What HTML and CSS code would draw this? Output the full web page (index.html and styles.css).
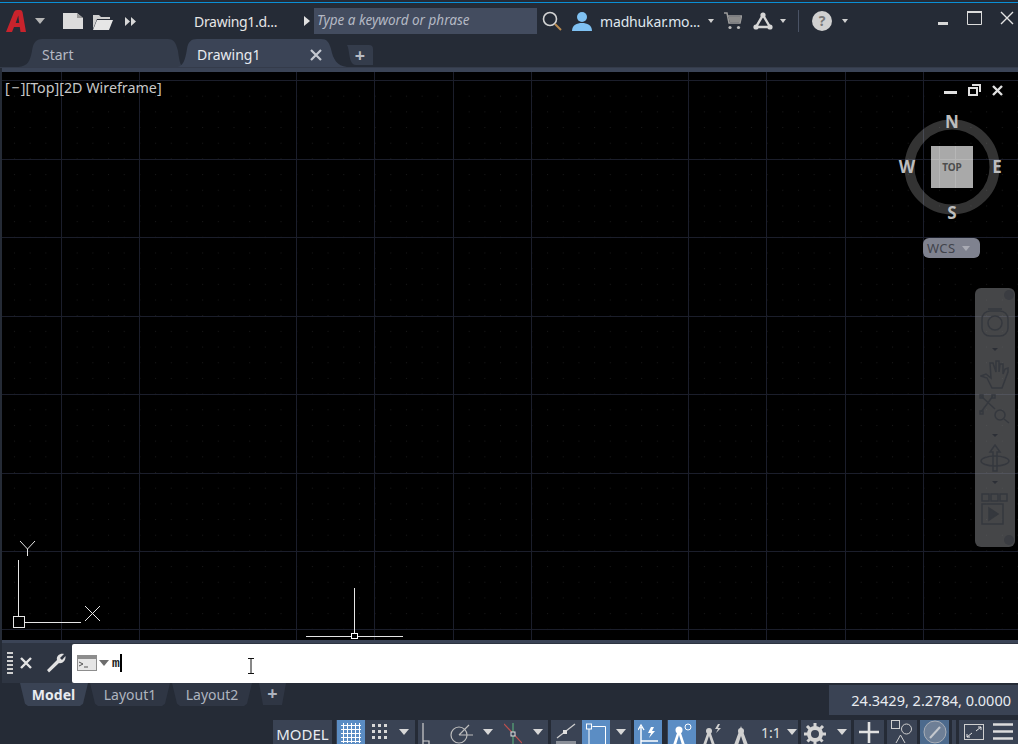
FILE: index.html
```html
<!DOCTYPE html>
<html lang="en">
  <head>
    <meta charset="UTF-8" />
    <title>AutoCAD - Drawing1</title>
    <link rel="stylesheet" href="styles.css">
  </head>
  <body>
    <!-- Title bar -->
    <header class="titlebar">
      <svg class="logo" width="20" height="24" viewBox="0 0 20 24"><path d="M0 23 L8 3 Q9 1 11 1 H14 Q16 1 16.5 3 L20 23 H14.5 L13.8 18 H8 L6 23 Z M9.7 14 H13.2 L12.3 6.5 Z" fill="#c8232c" fill-rule="evenodd"/></svg>
      <span class="caret caret-logo"></span>
      <svg class="ico-new" width="20" height="16" viewBox="0 0 20 16"><path d="M0 0 H14 L20 5 V16 H0 Z" fill="#dcdcdc"/><path d="M14 0 V5 H20" fill="#9a9a9a"/></svg>
      <svg class="ico-open" width="20" height="17" viewBox="0 0 20 17"><path d="M0 16 V2 H6 L8 4 H17 V6 H4 Z" fill="#cfcfcf"/><path d="M4 7 H20 L16 17 H0 Z" fill="#e6e6e6"/></svg>
      <svg class="ico-more" width="11" height="9" viewBox="0 0 11 9"><path d="M0 0 L5 4.5 L0 9 Z M6 0 L11 4.5 L6 9 Z" fill="#d8d8d8"/></svg>
      <span class="doc-name">Drawing1.d...</span>
      <svg class="ico-play" width="6" height="10" viewBox="0 0 6 10"><path d="M0 0 L6 5 L0 10 Z" fill="#e0e0e0"/></svg>
      <div class="search">Type a keyword or phrase</div>
      <svg class="ico-lens" width="20" height="20" viewBox="0 0 20 20"><circle cx="8" cy="8" r="6.5" fill="none" stroke="#d4d4d4" stroke-width="1.6"/><path d="M13 13 L19 19" stroke="#b98a4e" stroke-width="2"/></svg>
      <svg class="ico-user" width="20" height="20" viewBox="0 0 20 20"><circle cx="10" cy="6" r="5" fill="#7fc1f2"/><path d="M0 20 C0 14 5 12 10 12 C15 12 20 14 20 20 Z" fill="#7fc1f2"/></svg>
      <span class="user-name">madhukar.mo...</span>
      <span class="caret caret-small caret-user"></span>
      <svg class="ico-cart" width="18" height="18" viewBox="0 0 18 18"><path d="M0 1 H3 L5 11 H16 L17.5 4 H4" fill="none" stroke="#9b9b9b" stroke-width="1.5"/><path d="M4.5 5 H17 L16 10 H5.5 Z" fill="#8a8a8a"/><circle cx="6" cy="15.5" r="1.6" fill="#bbb"/><circle cx="14.5" cy="15.5" r="1.6" fill="#bbb"/></svg>
      <svg class="ico-tri" width="20" height="18" viewBox="0 0 20 18"><path d="M10 3 L17 15 H3 Z" fill="none" stroke="#d6d6d6" stroke-width="2.4"/><circle cx="10" cy="3" r="2.6" fill="#d6d6d6"/><circle cx="3" cy="15" r="2.6" fill="#d6d6d6"/><circle cx="17" cy="15" r="2.6" fill="#d6d6d6"/></svg>
      <span class="caret caret-small caret-tri"></span>
      <span class="sep"></span>
      <span class="help">?</span>
      <span class="caret caret-small caret-help"></span>
      <svg class="win-min" width="10" height="3" viewBox="0 0 10 3"><rect width="10" height="3" fill="#d8d8d8"/></svg>
      <svg class="win-max" width="15" height="14" viewBox="0 0 15 14"><path d="M.5 1.5 H14.5 V13.5 H.5 Z" fill="none" stroke="#dcdcdc"/><rect width="15" height="2" fill="#dcdcdc"/></svg>
      <svg class="win-close" width="14" height="14" viewBox="0 0 14 14"><path d="M1 1 L13 13 M13 1 L1 13" stroke="#e4e4e4" stroke-width="1.4"/></svg>
    </header>

    <!-- File tabs -->
    <nav class="filetabs">
      <div class="filetab tab-start">
        <svg class="tab-shape" viewBox="0 0 165 28" preserveAspectRatio="none"><path d="M0 28 C10 27 12 22 14 12 C15 4 18 0 24 0 H150 C156 0 158 4 160 12 C161 20 162 26 165 28 Z" fill="#343c4b"/></svg>
        <span class="tab-label">Start</span>
      </div>
      <div class="filetab tab-active">
        <svg class="tab-shape" viewBox="0 0 170 28" preserveAspectRatio="none"><path d="M0 28 C6 27 8 22 10 10 C11 3 14 0 20 0 H144 C150 0 152 3 154 10 C156 20 160 27 170 28 Z" fill="#3b4456"/></svg>
        <span class="tab-label">Drawing1</span>
        <svg class="tab-close" width="12" height="12" viewBox="0 0 12 12"><path d="M1 1 L11 11 M11 1 L1 11" stroke="#c4c8d0" stroke-width="2.2"/></svg>
      </div>
      <div class="filetab tab-plus">
        <svg class="tab-shape" viewBox="0 0 26 20" preserveAspectRatio="none"><path d="M0 0 H22 Q26 0 26 4 V20 H9 C4 20 3 14 2 8 C1.500 4 1 2 0 0 Z" fill="#343c4b"/></svg>
        <span class="plus">+</span>
      </div>
    </nav>

    <!-- Drawing area -->
    <main class="viewport">
      <svg class="canvas" width="1016" height="568" viewBox="2 72 1016 568">
        <defs>
          <pattern id="dots" x="61" y="80" width="15.68" height="15.68" patternUnits="userSpaceOnUse">
            <rect width="1" height="1" fill="#191919"/>
          </pattern>
        </defs>
        <rect x="2" y="72" width="1016" height="568" fill="#000"/>
        <rect x="2" y="72" width="1016" height="568" fill="url(#dots)"/>
        <g stroke="#1b1e2b" stroke-width="1">
          <path d="M2 80.5 H1018 M2 159.5 H1018 M2 237.5 H1018 M2 316.5 H1018 M2 394.5 H1018 M2 473.5 H1018 M2 551.5 H1018 M2 629.5 H1018"/>
          <path d="M61.5 72 V640 M139.5 72 V640 M296.5 72 V640 M374.5 72 V640 M453.5 72 V640 M531.5 72 V640 M688.5 72 V640 M766.5 72 V640 M845.5 72 V640 M923.5 72 V640"/>
        </g>
        <!-- UCS icon -->
        <g stroke="#e6e6e6" fill="none" stroke-width="1">
          <path d="M18.5 560 V616 M25 622.5 H81"/>
          <rect x="13.5" y="616.5" width="11" height="11"/>
          <path d="M85 606 L100 621 M100 606 L85 621"/>
          <path d="M20 541 L27.5 549 L35 541 M27.5 549 V556"/>
        </g>
        <!-- Crosshair -->
        <g stroke="#e6e6e6" fill="none" stroke-width="1">
          <path d="M354.5 588 V633 M306 636.5 H351 M358 636.5 H403"/>
          <rect x="351.5" y="633.5" width="6" height="5" stroke="#fff"/>
        </g>
      </svg>

      <div class="view-label">[&#8202;&minus;&#8202;][Top][2D Wireframe]</div>

      <div class="view-controls">
        <span class="vc-min"></span>
        <svg width="13" height="12" viewBox="0 0 13 12"><path d="M4 1 H12 V8 M1 4 H9 V11 H1 Z" fill="none" stroke="#e0e0e0" stroke-width="2"/></svg>
        <svg width="11" height="11" viewBox="0 0 11 11"><path d="M1 1 L10 10 M10 1 L1 10" stroke="#e0e0e0" stroke-width="2.4"/></svg>
      </div>

      <svg class="viewcube" width="114" height="114" viewBox="0 0 114 114">
        <circle cx="57" cy="56" r="42.500" fill="none" stroke="#fff" stroke-opacity=".2" stroke-width="10"/>
        <rect x="36" y="35" width="42" height="42" fill="#a9a9a9"/>
        <path d="M44.500 35 V77 M60.500 35 V77 M36 48.500 H78" stroke="#b6b6b6"/>
        <text x="57" y="60" class="cube-top">TOP</text>
        <text x="57" y="17" class="cube-dir">N</text>
        <text x="57" y="108" class="cube-dir">S</text>
        <text x="12" y="62" class="cube-dir">W</text>
        <text x="102" y="62" class="cube-dir">E</text>
      </svg>

      <div class="wcs">WCS <span class="wcs-caret"></span></div>

      <!-- Navigation bar -->
      <aside class="navbar">
        <span class="nav-dot nav-dot-top"></span>
        <svg width="30" height="30" viewBox="0 0 30 30" fill="none" stroke-width="1.5"><rect x="2" y="3" width="26" height="25" rx="8"/><circle cx="15" cy="15" r="7"/><path d="M8 1 H22"/></svg>
        <span class="nav-caret nav-c1"></span>
        <svg class="nav-hand" width="30" height="30" viewBox="0 0 30 30" fill="none" stroke-width="1.5"><path d="M1 17 L7 19 L12 29 H22 L28 13 V9 L25 10 L23 15 V5 L20 5 L19 13 V2 H16 V13 L13 4 H10 L11 19 L6 15 Z"/></svg>
        <svg class="nav-zoom" width="32" height="30" viewBox="0 0 32 30" fill="none" stroke-width="1.5"><path d="M2 2 L16 15 M14 2 L2 18"/><rect x="1" y="1" width="3" height="3"/><rect x="13" y="1" width="3" height="3"/><rect x="1" y="17" width="3" height="3"/><circle cx="21" cy="21" r="5"/><path d="M25 25 L30 29"/></svg>
        <span class="nav-caret nav-c2"></span>
        <svg class="nav-orbit" width="32" height="28" viewBox="0 0 32 28" fill="none" stroke-width="1.5"><path d="M16 1 L21 8 H18 V27 H14 V8 H11 Z"/><ellipse cx="16" cy="17" rx="14" ry="5"/></svg>
        <span class="nav-caret nav-c3"></span>
        <svg class="nav-show" width="30" height="32" viewBox="0 0 30 32" fill="none" stroke-width="1.5"><rect x="2" y="1" width="7" height="7"/><rect x="11" y="1" width="7" height="7"/><rect x="20" y="1" width="7" height="7"/><rect x="2" y="11" width="21" height="20"/><path class="nav-play" d="M9 15 L18 21 L9 27 Z"/></svg>
        <span class="nav-dot nav-dot-bottom"></span>
      </aside>
    </main>

    <!-- Command line -->
    <section class="cmdline">
      <span class="grip"></span>
      <svg class="cmd-x" width="12" height="12" viewBox="0 0 12 12"><path d="M1 1 L11 11 M11 1 L1 11" stroke="#e4e4e4" stroke-width="2.4"/></svg>
      <svg class="cmd-wrench" width="20" height="20" viewBox="0 0 20 20"><path d="M1 17 L11 7 C10 3 14 0 18 1 L14 5 L16 7 L19.5 3 C20 8 16 11 13 10 L3 19.5 Z" fill="#e2e2e2"/></svg>
      <div class="cmd-input">
        <svg width="20" height="16" viewBox="0 0 20 16"><rect width="20" height="16" fill="#8d8d8d"/><rect x="1" y="4" width="18" height="11" fill="#e6e6e6"/><path d="M2 7 L6 9 L2 11 M7 12 H11" fill="none" stroke="#555" stroke-width="1"/></svg>
        <span class="caret caret-cmd"></span>
        <span class="cmd-text">m</span><span class="cmd-cursor"></span>
        <svg class="ibeam" width="8" height="16" viewBox="0 0 8 16"><path d="M1 .5 H7 M1 15.500 H7 M4 .5 V15.500" stroke="#111" stroke-width="1" fill="none"/></svg>
      </div>
    </section>

    <!-- Layout tabs and coordinates -->
    <section class="layoutbar">
      <div class="layout-tab active">Model</div>
      <div class="layout-tab">Layout1</div>
      <div class="layout-tab">Layout2</div>
      <div class="layout-plus">+</div>
      <div class="coords">24.3429, 2.2784, 0.0000</div>
    </section>

    <!-- Status bar -->
    <footer class="statusbar">
      <div class="group w59 model">MODEL</div>
      <div class="group w79">
        <button class="btn on w28"><svg width="20" height="20" viewBox="0 0 20 20"><path d="M0 2.500 H20 M0 6.500 H20 M0 10.500 H20 M0 14.500 H20 M0 18.500 H20 M2.500 0 V20 M6.500 0 V20 M10.500 0 V20 M14.500 0 V20 M18.500 0 V20" stroke="#fff"/></svg></button>
        <button class="btn w28"><svg width="16" height="16" viewBox="0 0 16 16"><g fill="#d8d8d8"><rect x="1" y="1" width="3" height="3"/><rect x="7" y="1" width="3" height="3"/><rect x="13" y="1" width="3" height="3"/><rect x="1" y="7" width="3" height="3"/><rect x="7" y="7" width="3" height="3"/><rect x="13" y="7" width="3" height="3"/><rect x="1" y="13" width="3" height="3"/><rect x="7" y="13" width="3" height="3"/><rect x="13" y="13" width="3" height="3"/></g></svg></button>
        <span class="caret caret-st"></span>
      </div>
      <div class="group w130">
        <button class="btn w28 btn-ortho"><svg width="8" height="24" viewBox="0 0 8 24"><path d="M1 0 V24 M1 18 H7 V24" fill="none" stroke="#cfcfcf" stroke-width="1.2"/></svg></button>
        <button class="btn w32"><svg width="24" height="22" viewBox="0 0 24 22"><circle cx="10" cy="12" r="8" fill="none" stroke="#bdbdbd" stroke-width="1.2"/><path d="M10 12 L20 2 M10 12 H24" stroke="#bdbdbd" stroke-width="1.2"/></svg></button>
        <span class="caret caret-st"></span>
        <button class="btn w28"><svg width="18" height="24" viewBox="0 0 18 24"><path d="M0 1 L18 20" stroke="#c0504d" stroke-width="1.2"/><path d="M9 0 V24" stroke="#58a878" stroke-width="1.2"/><rect x="7" y="9" width="4" height="4" fill="#3b4456" stroke="#e0e0e0"/></svg></button>
        <span class="caret caret-st"></span>
      </div>
      <div class="group w80">
        <button class="btn w31"><svg width="20" height="22" viewBox="0 0 20 22"><path d="M1 15 L19 1" stroke="#cfcfcf" stroke-width="1.2"/><rect y="18" width="20" height="4" fill="#8a8f98"/><rect x="7" y="7" width="4" height="4" fill="#e0e0e0"/></svg></button>
        <button class="btn on w28"><svg width="20" height="24" viewBox="0 0 20 24"><path d="M6.500 3.500 H19.500 V24" fill="none" stroke="#fff"/><rect x=".5" y="1" width="5" height="5" fill="none" stroke="#fff"/><path d="M3 6 V24" stroke="#fff"/></svg></button>
        <span class="caret caret-st"></span>
      </div>
      <div class="group w28 tail">
        <button class="btn on w28"><svg width="20" height="22" viewBox="0 0 20 22"><path d="M3 22 V4 M0 7 L3 2 L6 7 M3 18 H20" fill="none" stroke="#fff" stroke-width="1.4"/><path d="M13 4 L10 10 H13 L11 15 L17 8 H14 L16 4 Z" fill="#fff"/></svg></button>
      </div>
      <div class="group w131">
        <button class="btn on w28"><svg width="22" height="22" viewBox="0 0 22 22"><path d="M8 4 L2 22 H5 L8 12 L11 22 H14 Z" fill="#fff"/><circle cx="8" cy="7" r="3.500" fill="#fff"/><circle cx="17" cy="4" r="3" fill="none" stroke="#fff"/></svg></button>
        <button class="btn w31"><svg width="22" height="22" viewBox="0 0 22 22"><path d="M8 5 L2 22 H5 L8 13 L11 22 H14 Z" fill="#cfcfcf"/><circle cx="8" cy="8" r="3" fill="#cfcfcf"/><path d="M17 1 L14 6 H17 L15 10 L20 5 H17 L19 1 Z" fill="#cfcfcf"/></svg></button>
        <button class="btn w28"><svg width="20" height="22" viewBox="0 0 20 22"><path d="M10 3 L3 22 H7 L10 13 L13 22 H17 Z" fill="#cfcfcf"/><circle cx="10" cy="8" r="3" fill="#cfcfcf"/></svg></button>
        <span class="scale">1:1</span>
        <span class="caret caret-st caret-scale"></span>
      </div>
      <div class="group w50">
        <button class="btn w32"><svg width="22" height="22" viewBox="0 0 22 22"><circle cx="11" cy="11" r="6" fill="none" stroke="#d4d4d4" stroke-width="4"/><path d="M11 0 V22 M0 11 H22 M3 3 L19 19 M19 3 L3 19" stroke="#d4d4d4" stroke-width="3" stroke-dasharray="4 14"/></svg></button>
        <span class="caret caret-st"></span>
      </div>
      <div class="group w30">
        <svg width="20" height="22" viewBox="0 0 20 22"><path d="M10 1 V22 M0 11 H20" stroke="#e2e2e2" stroke-width="2.6"/></svg>
      </div>
      <div class="group w30">
        <svg width="22" height="24" viewBox="0 0 22 24"><rect x=".5" y=".5" width="8" height="8" fill="none" stroke="#cfcfcf"/><circle cx="15.500" cy="9" r="5" fill="none" stroke="#cfcfcf"/><path d="M5 23 L9.500 15 L14 23" fill="none" stroke="#cfcfcf"/></svg>
      </div>
      <div class="group w29 muted">
        <svg width="24" height="24" viewBox="0 0 24 24"><circle cx="12" cy="12" r="11" fill="#6e7f96" stroke="#a7adb6"/><path d="M7 18 L17 7" stroke="#c4c8ce" stroke-width="2"/></svg>
      </div>
      <div class="group w4"></div>
      <div class="group grow">
        <svg width="20" height="16" viewBox="0 0 20 16"><rect x=".5" y=".5" width="19" height="15" fill="none" stroke="#cfcfcf"/><path d="M3 13 L8 9 M3 13 V10 M3 13 H6 M17 3 L12 7 M17 3 V6 M17 3 H14" stroke="#e6e6e6" fill="none"/></svg>
        <svg width="20" height="18" viewBox="0 0 20 18"><path d="M0 1.500 H20 M0 8.500 H20 M0 15.500 H20" stroke="#dcdcdc" stroke-width="2.400"/></svg>
      </div>
    </footer>
  </body>
</html>
```

FILE: styles.css
```css
* {
  box-sizing: border-box;
}
html,
body {
  margin: 0;
  height: 100%;
}
body {
  width: 1018px;
  height: 744px;
  overflow: hidden;
  display: flex;
  flex-direction: column;
  background: #252b36;
  font-family: "Noto Sans", "Open Sans", sans-serif;
  color: #e6e6e6;
}

/* Title bar */
.titlebar {
  height: 39px;
  flex: none;
  display: flex;
  align-items: center;
  padding: 3px 0 0 6px;
  background: linear-gradient(#252b36 2px, #0a8fd6 2px 3px, transparent 3px);
}
.caret {
  width: 0;
  height: 0;
  flex: none;
  border-left: 5px solid transparent;
  border-right: 5px solid transparent;
  border-top: 6px solid #b5b5b5;
}
.caret-small {
  border-left-width: 3.5px;
  border-right-width: 3.5px;
  border-top-width: 4px;
  border-top-color: #d0d0d0;
}
.titlebar svg,
.titlebar span {
  flex: none;
}
.caret-logo { margin-left: 9px; }
.ico-new { margin-left: 18px; }
.ico-open { margin-left: 10px; }
.ico-more { margin-left: 12px; }
.doc-name {
  margin-left: 58px;
  width: 104px;
  font-size: 14px;
  letter-spacing: -.3px;
}
.ico-play { margin-left: 6px; }
.search {
  margin-left: 4px;
  width: 223px;
  height: 26px;
  flex: none;
  padding-left: 3px;
  line-height: 25px;
  background: #434c5f;
  color: #b4b9c4;
  font-size: 13.5px;
  font-style: italic;
}
.ico-lens { margin-left: 5px; }
.ico-user { margin-left: 10px; }
.user-name {
  margin-left: 8px;
  width: 104px;
  font-size: 14px;
  letter-spacing: -.15px;
  color: #dfe6ee;
}
.caret-user { margin-left: 4px; }
.ico-cart { margin-left: 10px; }
.ico-tri { margin-left: 11px; }
.caret-tri { margin-left: 7px; }
.sep {
  width: 1px;
  height: 22px;
  margin-left: 12px;
  background: #4a5365;
}
.help {
  width: 20px;
  height: 20px;
  margin-left: 13px;
  border-radius: 50%;
  background: #d0d0d0;
  color: #777;
  font-size: 14px;
  font-weight: 700;
  line-height: 20px;
  text-align: center;
}
.caret-help { margin-left: 10px; }
.win-min { margin: 5px 0 0 90px; }
.win-max { margin: -6px 0 0 19px; }
.win-close { margin: -6px 0 0 18px; }

/* File tabs */
.filetabs {
  height: 29px;
  flex: none;
  display: flex;
  align-items: flex-end;
  padding-left: 18px;
  border-bottom: 1px solid #343b4a;
}
.filetab {
  position: relative;
  height: 28px;
  display: flex;
  align-items: center;
  padding-top: 3px;
  font-size: 14px;
}
.tab-shape {
  position: absolute;
  left: 0;
  top: 0;
  width: 100%;
  height: 100%;
}
.tab-label,
.tab-close,
.plus {
  position: relative;
}
.tab-start {
  width: 165px;
  padding-left: 24px;
  color: #b4b9c4;
}
.tab-active {
  width: 170px;
  margin-left: -6px;
  padding-left: 20px;
  color: #e8ebf0;
}
.tab-close {
  margin-left: 50px;
}
.tab-plus {
  width: 26px;
  height: 20px;
  margin: 0 0 2px;
  padding-top: 0;
  justify-content: center;
}
.plus {
  color: #b8bcc4;
  font-size: 18px;
  font-weight: 700;
  line-height: 20px;
}

/* Drawing area */
.viewport {
  position: relative;
  flex: 1;
  min-height: 0;
  margin-left: 2px;
  border-top: 4px solid #3b4456;
  background: #000;
  overflow: hidden;
}
.canvas {
  display: block;
  position: absolute;
  left: 0;
  top: 0;
}
.view-label {
  position: absolute;
  left: 3px;
  top: 7px;
  font-size: 14.3px;
  line-height: 18px;
  color: #c8c8c8;
}
.view-controls {
  position: absolute;
  left: 942px;
  top: 12px;
  display: flex;
  align-items: center;
  gap: 11px;
}
.vc-min {
  width: 13px;
  height: 3px;
  margin-top: 5px;
  background: #e0e0e0;
}
.viewcube {
  position: absolute;
  left: 893px;
  top: 39px;
}
.cube-top {
  font-family: "Noto Sans", sans-serif;
  font-size: 10px;
  font-weight: 700;
  fill: #4d4d4d;
  text-anchor: middle;
}
.cube-dir {
  font-family: "Noto Sans", sans-serif;
  font-size: 17px;
  font-weight: 700;
  fill: #bdbdbd;
  text-anchor: middle;
}
.wcs {
  position: absolute;
  left: 921px;
  top: 166px;
  width: 57px;
  height: 20px;
  display: flex;
  align-items: center;
  gap: 6px;
  padding-left: 4px;
  border-radius: 6px;
  background: #7f828f;
  font-size: 13px;
  letter-spacing: .4px;
  color: #41434b;
}
.wcs-caret {
  width: 0;
  height: 0;
  border-left: 4px solid transparent;
  border-right: 4px solid transparent;
  border-top: 5px solid #a9abb4;
}
.navbar {
  position: absolute;
  left: 973px;
  top: 216px;
  width: 40px;
  height: 259px;
  display: flex;
  flex-direction: column;
  align-items: center;
  padding-top: 20px;
  border-radius: 6px;
  background: rgba(125, 127, 132, .55);
}
.navbar svg,
.nav-caret {
  flex: none;
}
.navbar svg {
  stroke: #35383e;
}
.nav-play {
  fill: #35383e;
}
.nav-caret {
  width: 0;
  height: 0;
  border-left: 3px solid transparent;
  border-right: 3px solid transparent;
  border-top: 3px solid #2c2f36;
}
.nav-c1 { margin-top: 10px; }
.nav-hand { margin-top: 8px; }
.nav-zoom { margin-top: 5px; }
.nav-c2 { margin-top: 10px; }
.nav-orbit { margin-top: 7px; }
.nav-c3 { margin-top: 9px; }
.nav-show { margin-top: 9px; }
.nav-dot {
  position: absolute;
  right: 1px;
  width: 10px;
  height: 10px;
  border-radius: 50%;
  background: #3a3c41;
}
.nav-dot-top { top: 2px; }
.nav-dot-bottom { bottom: 2px; }

/* Command line */
.cmdline {
  height: 43px;
  flex: none;
  display: flex;
  align-items: center;
  margin-left: 2px;
  padding-left: 5px;
  border-top: 3px solid #3b4456;
  background: #2e3542;
}
.grip {
  width: 6px;
  height: 22px;
  flex: none;
  background: repeating-linear-gradient(#cfcfcf 0 2px, transparent 2px 4px);
}
.cmd-x {
  flex: none;
  margin-left: 7px;
}
.cmd-wrench {
  flex: none;
  margin-left: 14px;
}
.cmd-input {
  position: relative;
  flex: 1;
  height: 39px;
  margin-left: 6px;
  display: flex;
  align-items: center;
  padding-left: 5px;
  background: #fff;
  border-radius: 2px 0 0 2px;
}
.caret-cmd {
  margin-left: 2px;
  border-top-color: #6d6d6d;
}
.cmd-text {
  margin-left: 3px;
  font-family: "Liberation Mono", monospace;
  font-size: 13px;
  font-weight: 700;
  color: #222;
}
.cmd-cursor {
  width: 2px;
  height: 18px;
  background: #000;
}
.ibeam {
  position: absolute;
  left: 175px;
  top: 14px;
}

/* Layout tabs */
.layoutbar {
  height: 39px;
  flex: none;
  display: flex;
  align-items: flex-start;
  padding-left: 20px;
  font-size: 14px;
}
.layout-tab {
  width: 80px;
  height: 23px;
  margin-right: 2px;
  line-height: 23px;
  text-align: center;
  background: #2f3644;
  color: #aeb4bf;
  clip-path: polygon(0 0, 100% 0, calc(100% - 5px) 90%, calc(100% - 8px) 100%, 8px 100%, 5px 90%);
}
.layout-tab.active {
  width: 68px;
  padding-right: 1px;
  font-weight: 700;
  background: #3a4354;
  color: #e8ebf0;
}
.layout-plus {
  width: 27px;
  height: 22px;
  margin-left: 5px;
  line-height: 21px;
  text-align: center;
  font-size: 18px;
  font-weight: 700;
  background: #2f3644;
  color: #aeb4bf;
  clip-path: polygon(0 0, 100% 0, calc(100% - 4px) 100%, 4px 100%);
}
.coords {
  width: 189px;
  height: 30px;
  margin: 2px 0 0 auto;
  padding-right: 7px;
  background: #3a4354;
  color: #e8ebf0;
  font-size: 14.5px;
  line-height: 30px;
  text-align: right;
}

/* Status bar */
.statusbar {
  height: 24px;
  flex: none;
  display: flex;
  padding-left: 273px;
  margin-top: -2px;
  overflow: hidden;
}
.group {
  flex: none;
  height: 24px;
  display: flex;
  align-items: center;
  justify-content: center;
  margin-right: 3px;
  background: #3a4354;
}
.group.tail {
  margin-right: 5px;
}
.group.muted {
  background: #4c6a8d;
}
.group.grow {
  width: 61px;
  margin-right: 0;
  gap: 9px;
  padding-right: 2px;
}
.model {
  font-size: 15px;
  color: #e8ebf0;
  padding-top: 3px;
  margin-right: 4px;
}
.w4 { width: 4px; }
.w28 { width: 28px; }
.w29 { width: 29px; }
.w30 { width: 30px; }
.w31 { width: 31px; }
.w32 { width: 32px; }
.w50 { width: 50px; }
.w59 { width: 59px; }
.w79 { width: 79px; }
.w80 { width: 80px; }
.w130 { width: 130px; }
.w131 { width: 131px; }
.btn {
  flex: none;
  height: 24px;
  padding: 3px 0 0;
  border: none;
  display: flex;
  align-items: flex-start;
  justify-content: center;
  background: transparent;
}
.btn.on {
  background: #5b8dc4;
}
.btn-ortho {
  justify-content: flex-start;
  padding-left: 5px;
}
.caret-st {
  margin: 0 6px;
  border-top-color: #d8d8d8;
}
.scale {
  width: 22px;
  margin-left: 6px;
  font-size: 14px;
  color: #e0e0e0;
}
.caret-scale {
  margin: 0 0 0 4px;
}
```
